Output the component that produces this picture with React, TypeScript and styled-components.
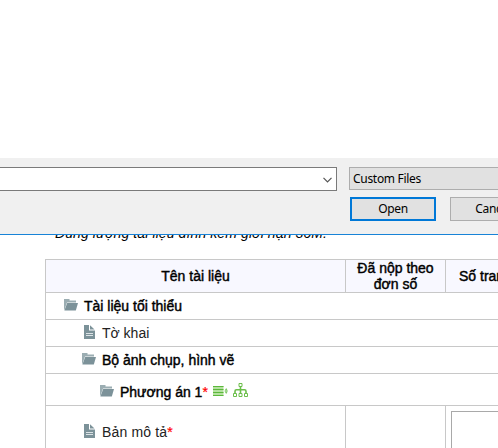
import React from 'react';
import styled, { createGlobalStyle } from 'styled-components';

const GlobalStyle = createGlobalStyle`
  * { box-sizing: border-box; }
  html, body { margin: 0; height: 100%; overflow: hidden; background: #fff; }
`;

const Page = styled.main`
  position: relative;
  width: 498px;
  height: 448px;
  overflow: hidden;
  padding: 225px 0 0 45px;
  background: #fff;
  color: #000;
  font-family: 'Liberation Sans', Arial, sans-serif;
  font-size: 14px;
`;

const Note = styled.p`
  margin: 0;
  height: 34px;
  padding-left: 10px;
  line-height: 17px;
  font-style: italic;
  white-space: nowrap;
  letter-spacing: 0.1px;
`;

const Dialog = styled.section`
  position: absolute;
  top: 158px;
  left: 0;
  width: 498px;
  height: 77px;
  overflow: hidden;
  display: flex;
  align-items: flex-start;
  gap: 12px;
  padding-top: 9px;
  background: #f0f0f0;
  border-bottom: 1px solid #1883d7;
  color: #000;
  font-family: 'Noto Sans', sans-serif;
  font-size: 12px;
`;

const FileName = styled.div`
  flex: 0 0 337px;
  height: 24px;
  display: flex;
  align-items: center;
  justify-content: flex-end;
  padding: 1px 4px 0 0;
  background: #fff;
  border: 1px solid #7a7a7a;
  border-left: 0;
`;

const Controls = styled.div`
  flex: 0 0 190px;
  display: flex;
  flex-direction: column;
  gap: 7px;
`;

const FileType = styled.div`
  height: 23px;
  padding-left: 3px;
  line-height: 22px;
  background: #e1e1e1;
  border: 1px solid #adadad;
  letter-spacing: -0.3px;
`;

const Buttons = styled.div`
  display: flex;
  gap: 14px;
  padding-left: 1px;
`;

const DialogButton = styled.button<{ $primary?: boolean }>`
  flex: 0 0 86px;
  height: 24px;
  padding: 0;
  background: #e1e1e1;
  border: ${(p) => (p.$primary ? '2px solid #0078d7' : '1px solid #adadad')};
  color: #000;
  font: inherit;
  line-height: 20px;
  letter-spacing: -0.3px;
`;

const Table = styled.div`
  width: 520px;
  border-top: 1px solid #c8c8c8;
  border-left: 1px solid #c8c8c8;
`;

const Row = styled.div<{ $height: number; $head?: boolean }>`
  display: grid;
  grid-template-columns: 300px 100px 119px;
  height: ${(p) => p.$height}px;
  background: ${(p) => (p.$head ? '#f8f8ff' : '#fff')};
  border-bottom: 1px solid #c8c8c8;
`;

const HeadCell = styled.div<{ $start?: boolean }>`
  display: flex;
  align-items: center;
  justify-content: ${(p) => (p.$start ? 'flex-start' : 'center')};
  padding-left: ${(p) => (p.$start ? 13 : 0)}px;
  border-right: 1px solid #c8c8c8;
  line-height: 16px;
  text-align: center;
  white-space: nowrap;
  -webkit-text-stroke: 0.42px #000;
`;

const NameCell = styled.div<{ $level: number; $strong?: boolean; $line?: boolean; $top?: number }>`
  display: flex;
  align-items: center;
  grid-column: ${(p) => (p.$line ? 'auto' : '1 / -1')};
  padding-left: ${(p) => 18 + p.$level * 18}px;
  padding-top: ${(p) => p.$top ?? 0}px;
  border-right: ${(p) => (p.$line ? '1px solid #c8c8c8' : '0')};
  white-space: nowrap;
  color: ${(p) => (p.$strong ? '#000' : '#222')};
  -webkit-text-stroke: ${(p) => (p.$strong ? '0.42px' : '0')};
`;

const Label = styled.span<{ $gap: number; $spacing?: number }>`
  margin-left: ${(p) => p.$gap}px;
  letter-spacing: ${(p) => p.$spacing ?? 0}px;
  line-height: 16px;
`;

const Required = styled.span`
  color: #f00;
  -webkit-text-stroke-width: 0.2px;
`;

const Actions = styled.span`
  display: flex;
  align-items: center;
  gap: 5px;
  margin: 0 0 4px 5px;
`;

const ValueCell = styled.div`
  border-right: 1px solid #c8c8c8;
`;

const PagesInput = styled.textarea`
  display: block;
  width: 100px;
  height: 42px;
  margin: 5px 5px 0;
  border: 1px solid #a9a9a9;
  border-radius: 0;
  resize: none;
  background: #fff;
`;

const Folder = styled.svg`
  flex: none;
  margin-bottom: 2px;
`;

const File = styled.svg`
  flex: none;
  margin: 0 0 2px 2px;
`;

const List = styled.svg`
  margin-top: 2px;
`;

const FolderIcon = () => (
  <Folder width="14" height="12" viewBox="0 0 14 12">
    <path d="M0 11.3V0h5.5v1.5H12v2H3L.8 9.8z" fill="#9badb2" />
    <path d="M3.2 4H14L11.8 11.5H.4z" fill="#7c9299" />
  </Folder>
);

const FileIcon = () => (
  <File width="11" height="14" viewBox="0 0 11 14">
    <path d="M0 0h5v5.5h6V14H0z" fill="#7c9299" />
    <path d="M6 .3V4.6h4.5z" fill="#7c9299" />
    <path d="M2 8.5h7M2 10.5h7" stroke="#dce3e6" />
  </File>
);

const ListIcon = () => (
  <List width="15" height="12" viewBox="0 0 15 12">
    <path d="M0 1h10.500v10H0z" fill="#b4e19f" />
    <path d="M0 1.5h10.5M0 4.5h10.5M0 7.500h10.5M0 10.5h10.500" stroke="#5cb83c" />
    <path d="M11.5 5.7L13.200 3l1.700 2.700zM11.5 6.300L13.200 9l1.700-2.700z" fill="#7cc862" />
  </List>
);

const TreeIcon = () => (
  <svg width="15" height="14" viewBox="0 0 15 14" fill="none" stroke="#6cbe4b">
    <path d="M6 .5h3v3H6zM.5 10.5h3v3h-3zM6 10.5h3v3H6zM11.5 10.5h3v3h-3z" />
    <path d="M7.5 4v6M2 10V8.200q0-1.400 1.400-1.400h8.200q1.400 0 1.400 1.400V10" strokeWidth="1.6" />
  </svg>
);

export default function App() {
  return (
    <>
      <GlobalStyle />
      <Page>
        <Note>Dung lượng tài liệu đính kèm giới hạn 30M.</Note>
        <Table>
          <Row $height={33} $head>
            <HeadCell>Tên tài liệu</HeadCell>
            <HeadCell>Đã nộp theo<br />đơn số</HeadCell>
            <HeadCell $start>Số trang</HeadCell>
          </Row>
          <Row $height={27}>
            <NameCell $level={0} $strong>
              <FolderIcon /><Label $gap={6}>Tài liệu tối thiểu</Label>
            </NameCell>
          </Row>
          <Row $height={27}>
            <NameCell $level={1}>
              <FileIcon /><Label $gap={7}>Tờ khai</Label>
            </NameCell>
          </Row>
          <Row $height={27}>
            <NameCell $level={1} $strong>
              <FolderIcon /><Label $gap={6}>Bộ ảnh chụp, hình vẽ</Label>
            </NameCell>
          </Row>
          <Row $height={32}>
            <NameCell $level={2} $strong $top={5}>
              <FolderIcon />
              <Label $gap={6}>Phương án 1<Required>*</Required></Label>
              <Actions><ListIcon /><TreeIcon /></Actions>
            </NameCell>
          </Row>
          <Row $height={53}>
            <NameCell $level={1} $line>
              <FileIcon />
              <Label $gap={7} $spacing={0.15}>Bản mô tả<Required>*</Required></Label>
            </NameCell>
            <ValueCell />
            <ValueCell><PagesInput /></ValueCell>
          </Row>
        </Table>
        <Dialog>
          <FileName>
            <svg width="9" height="6" viewBox="0 0 9 6" fill="none" stroke="#555" strokeWidth="1.2">
              <path d="M.5 .8l4 4 4-4" />
            </svg>
          </FileName>
          <Controls>
            <FileType>Custom Files</FileType>
            <Buttons>
              <DialogButton $primary>Open</DialogButton>
              <DialogButton>Cancel</DialogButton>
            </Buttons>
          </Controls>
        </Dialog>
      </Page>
    </>
  );
}
